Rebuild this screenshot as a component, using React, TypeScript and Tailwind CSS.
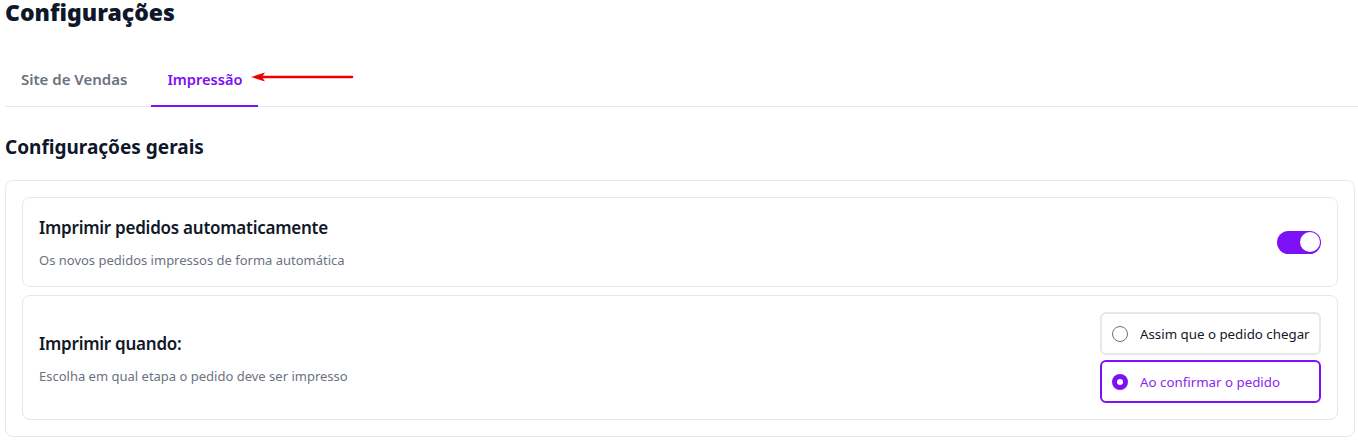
import React, { useState } from "react";

const font = { fontFamily: '"Noto Sans", "Open Sans", sans-serif' };

function Toggle({ on }: { on: boolean }) {
  return (
    <div className="w-[44px] h-[23px] rounded-full bg-[#7c10f6] flex items-center justify-end px-[1.5px]">
      <div className="w-[20px] h-[20px] rounded-full bg-white" />
    </div>
  );
}

function Radio({ checked, label }: { checked: boolean; label: string }) {
  return (
    <div
      className={
        checked
          ? "h-[43px] w-[221px] rounded-md border-2 border-[#7c10f6] flex items-center pl-[10px] gap-3"
          : "h-[43px] w-[221px] rounded-md border-2 border-[#e5e7eb] flex items-center pl-[10px] gap-3"
      }
    >
      {checked ? (
        <div className="w-4 h-4 rounded-full bg-[#7c10f6] flex items-center justify-center">
          <div className="w-[6px] h-[6px] rounded-full bg-white" />
        </div>
      ) : (
        <div className="w-4 h-4 rounded-full border-[1.5px] border-[#6b7280] bg-white" />
      )}
      <span
        className={
          checked
            ? "text-[13.3px] leading-5 text-[#8a1ff2]"
            : "text-[13.3px] leading-5 text-[#111827]"
        }
      >
        {label}
      </span>
    </div>
  );
}

export default function App() {
  const [tab] = useState(1);
  return (
    <div className="bg-white w-[1358px] h-[442px] overflow-hidden text-[#111827]" style={font}>
      <h1 className="pl-[5px] text-[23px] leading-[24px] font-black text-[#0f172a]">Configurações</h1>

      <div className="mt-[29px] ml-[5px] flex gap-2 border-b border-[#e5e7eb]">
        <button className={tab === 0 ? "" : "px-4 py-4 text-[15px] leading-5 font-semibold text-[#6b7280] border-b-2 border-transparent -mb-px"}>
          Site de Vendas
        </button>
        <div className="relative">
          <button className="px-4 py-4 text-[14.6px] leading-5 font-semibold text-[#7c10f6] border-b-2 border-[#7c10f6] -mb-px">
            Impressão
          </button>
          <svg
            className="absolute left-[99px] top-[19px]"
            width="104"
            height="10"
            viewBox="0 0 104 10"
          >
            <line x1="10" y1="5" x2="102" y2="5" stroke="#ef0000" strokeWidth="2.5" strokeLinecap="round" />
            <path d="M1 5 L15 0.5 L12 5 L15 9.5 Z" fill="#ef0000" />
          </svg>
        </div>
      </div>

      <h2 className="mt-[26px] pl-[5px] text-[19px] leading-7 font-bold text-[#0f172a]">Configurações gerais</h2>

      <div className="mt-[19px] ml-[5px] mr-[3px] rounded-lg border border-[#e5e7eb] p-4 flex flex-col gap-2">
        <div className="rounded-lg border border-[#e5e7eb] p-4 flex items-center justify-between">
          <div>
            <div className="text-[17px] leading-7 font-semibold tracking-[-0.25px] text-[#111827]">Imprimir pedidos automaticamente</div>
            <div className="mt-2 text-[13px] leading-5 text-[#6b7280]">Os novos pedidos impressos de forma automática</div>
          </div>
          <Toggle on />
        </div>
        <div className="rounded-lg border border-[#e5e7eb] p-4 flex items-center justify-between">
          <div>
            <div className="text-[17px] leading-7 font-semibold tracking-[-0.25px] text-[#111827]">Imprimir quando:</div>
            <div className="mt-2 text-[13px] leading-5 text-[#6b7280]">Escolha em qual etapa o pedido deve ser impresso</div>
          </div>
          <div className="flex flex-col gap-[5px]">
            <Radio checked={false} label="Assim que o pedido chegar" />
            <Radio checked label="Ao confirmar o pedido" />
          </div>
        </div>
      </div>
    </div>
  );
}
